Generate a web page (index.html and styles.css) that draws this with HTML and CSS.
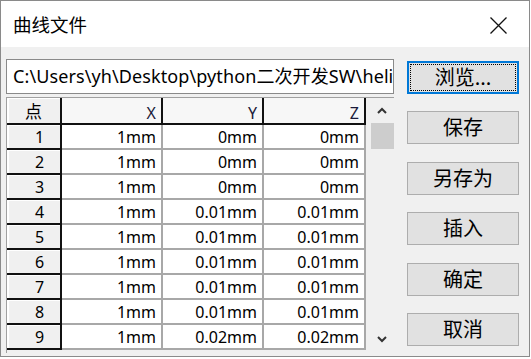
FILE: index.html
```html
<!DOCTYPE html>
<html lang="zh">
<head>
<meta charset="utf-8">
<title>曲线文件</title>
<link rel="stylesheet" href="styles.css">
</head>
<body>
<div class="window">
  <div class="titlebar">
    <span class="title">曲线文件</span>
    <svg class="close" width="17" height="17" viewBox="0 0 17 17"><path d="M0.5 0.5 L16.5 16.5 M16.5 0.5 L0.5 16.5" stroke="#111" stroke-width="1.3" fill="none"/></svg>
  </div>
  <div class="content">
    <div class="left">
      <div class="path"><span class="path-text">C:\Users\yh\Desktop\python二次开发SW\helix.txt</span></div>
      <div class="table">
        <div class="grid">
          <div class="rh hd0">点</div><div class="hd">X</div><div class="hd">Y</div><div class="hd">Z</div>
          <div class="rh">1</div><div class="c">1mm</div><div class="c">0mm</div><div class="c">0mm</div>
          <div class="rh">2</div><div class="c">1mm</div><div class="c">0mm</div><div class="c">0mm</div>
          <div class="rh">3</div><div class="c">1mm</div><div class="c">0mm</div><div class="c">0mm</div>
          <div class="rh">4</div><div class="c">1mm</div><div class="c">0.01mm</div><div class="c">0.01mm</div>
          <div class="rh">5</div><div class="c">1mm</div><div class="c">0.01mm</div><div class="c">0.01mm</div>
          <div class="rh">6</div><div class="c">1mm</div><div class="c">0.01mm</div><div class="c">0.01mm</div>
          <div class="rh">7</div><div class="c">1mm</div><div class="c">0.01mm</div><div class="c">0.01mm</div>
          <div class="rh">8</div><div class="c">1mm</div><div class="c">0.01mm</div><div class="c">0.01mm</div>
          <div class="rh">9</div><div class="c">1mm</div><div class="c">0.02mm</div><div class="c">0.02mm</div>
        </div>
        <div class="scroll">
          <svg class="arrow" width="10" height="7" viewBox="0 0 10 7"><path d="M1 6 L5 2 L9 6" stroke="#333" stroke-width="2" fill="none"/></svg>
          <div class="thumb"></div>
          <div class="track"></div>
          <svg class="arrow" width="10" height="7" viewBox="0 0 10 7"><path d="M1 1 L5 5 L9 1" stroke="#333" stroke-width="2" fill="none"/></svg>
        </div>
      </div>
    </div>
    <div class="buttons">
      <div class="btn focus">浏览...</div>
      <div class="btn">保存</div>
      <div class="btn">另存为</div>
      <div class="btn">插入</div>
      <div class="btn">确定</div>
      <div class="btn">取消</div>
    </div>
  </div>
</div>
</body>
</html>
```
FILE: styles.css
```css
* { box-sizing: border-box; }
html, body { margin: 0; padding: 0; background: #fff; }
body {
  font-family: "Noto Sans", "Noto Sans CJK SC", sans-serif;
  color: #000;
}
.window {
  width: 530px;
  height: 357px;
  border: 1px solid #8a8a8a;
  display: flex;
  flex-direction: column;
  background: #f0f0f0;
  overflow: hidden;
}
.titlebar {
  height: 46px;
  flex: none;
  background: #fff;
  display: flex;
  align-items: center;
  padding-left: 12px;
}
.title {
  font-family: "Noto Sans CJK SC", sans-serif;
  font-size: 18.5px;
  line-height: 1;
  padding-top: 1px;
}
.close {
  margin-left: auto;
  margin-right: 22px;
  margin-top: 2px;
}
.content {
  flex: 1;
  display: flex;
  padding: 12px 0 0 5px;
}
.left {
  width: 388px;
  display: flex;
  flex-direction: column;
}
.path {
  height: 35px;
  background: #fff;
  border: 1px solid #8a8a8a;
  padding-left: 6px;
  overflow: hidden;
  display: flex;
  align-items: center;
}
.path-text {
  font-size: 18px;
  line-height: 1.2;
  white-space: nowrap;
  letter-spacing: 0.1px;
}
.table {
  margin-top: 3px;
  height: 256px;
  display: flex;
  border-left: 1px solid #a0a0a0;
  border-top: 1px solid #a0a0a0;
}
.grid {
  display: grid;
  grid-template-columns: 55px 101px 101px 102px;
  grid-template-rows: 27px repeat(9, 25px);
  align-content: start;
  font-size: 16px;
  overflow: hidden;
}
.rh {
  background: #f0f0f0;
  border-right: 2px solid #111;
  border-bottom: 2px solid #111;
  box-shadow: inset 2px 1px 0 #fff;
  text-align: center;
  padding-left: 12px;
  line-height: 24px;
}
.hd0 {
  font-family: "Noto Sans CJK SC", sans-serif;
  font-size: 17px;
  padding-left: 0;
  line-height: 25px;
}
.hd {
  background: #f7f7f7;
  border-right: 2px solid #111;
  border-bottom: 2px solid #111;
  text-align: right;
  padding-right: 5px;
  line-height: 31px;
  color: #1a1a3a;
}
.c {
  background: #fff;
  border-right: 2px solid #a8a8a8;
  border-bottom: 2px solid #a8a8a8;
  text-align: right;
  padding-right: 5px;
  line-height: 24px;
}
.scroll {
  width: 28px;
  display: flex;
  flex-direction: column;
  align-items: center;
  padding: 9px 0 10px 3px;
}
.arrow { flex: none; }
.thumb {
  width: 23px;
  height: 26px;
  background: #cdcdcd;
  margin-top: 9px;
  margin-left: 2px;
}
.track { flex: 1; }
.buttons {
  margin-left: 13px;
  margin-top: 2px;
  width: 112px;
  display: flex;
  flex-direction: column;
  gap: 17.4px;
}
.btn {
  position: relative;
  height: 33px;
  background: #e1e1e1;
  border: 1px solid #adadad;
  font-family: "Noto Sans CJK SC", sans-serif;
  font-size: 20px;
  line-height: 30px;
  text-align: center;
}
.btn.focus {
  border: 2px solid #0078d7;
  line-height: 28px;
}
.btn.focus::after {
  content: "";
  position: absolute;
  inset: 1px;
  border: 1px dotted #000;
}
```
